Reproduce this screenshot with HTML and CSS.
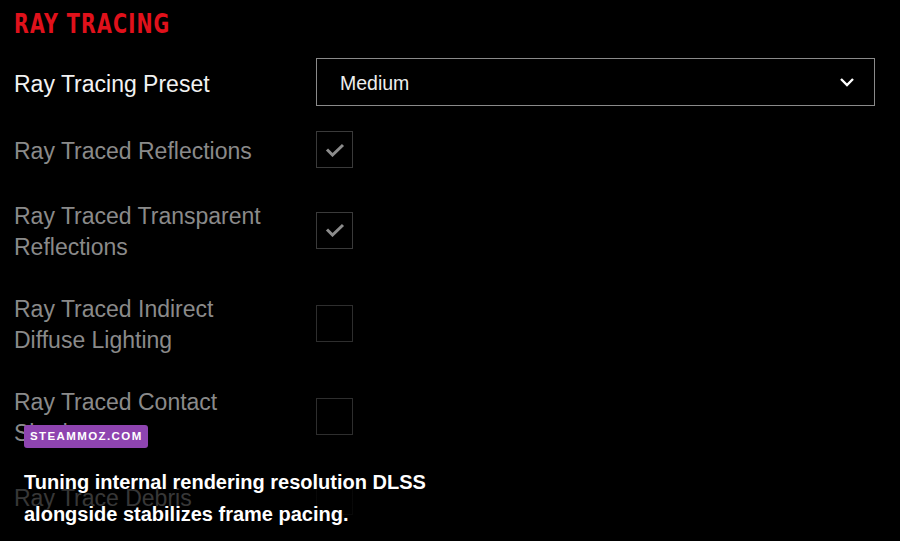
FILE: index.html
```html
<!DOCTYPE html>
<html>
<head>
<meta charset="utf-8">
<link rel="stylesheet" href="styles.css">
</head>
<body>
<div class="page">
  <h1 class="title"><span class="title-text">RAY TRACING</span></h1>
  <div class="row row-preset">
    <div class="label label-main">Ray Tracing Preset</div>
    <div class="select">
      <span class="select-value">Medium</span>
      <svg class="chevron" width="16" height="10" viewBox="0 0 16 10"><path d="M2 2 L8 8 L14 2" fill="none" stroke="#fff" stroke-width="2.4"/></svg>
    </div>
  </div>
  <div class="row">
    <div class="label">Ray Traced Reflections</div>
    <div class="check checked"><svg width="20" height="14" viewBox="0 0 20 14"><path d="M2 6.5 L7.5 12 L18 2" fill="none" stroke="#8c8c8c" stroke-width="3"/></svg></div>
  </div>
  <div class="row">
    <div class="label">Ray Traced Transparent<br>Reflections</div>
    <div class="check checked"><svg width="20" height="14" viewBox="0 0 20 14"><path d="M2 6.5 L7.5 12 L18 2" fill="none" stroke="#8c8c8c" stroke-width="3"/></svg></div>
  </div>
  <div class="row">
    <div class="label">Ray Traced Indirect<br>Diffuse Lighting</div>
    <div class="check"></div>
  </div>
  <div class="row">
    <div class="label">Ray Traced Contact<br>Shadows</div>
    <div class="check"></div>
  </div>
  <div class="row">
    <div class="label">Ray Trace Debris</div>
    <div class="check check-dim"></div>
  </div>
</div>
<div class="shade"></div>
<div class="overlay">
  <div class="badge">STEAMMOZ.COM</div>
  <p class="caption">Tuning internal rendering resolution DLSS<br>alongside stabilizes frame pacing.</p>
</div>
</body>
</html>
```
FILE: styles.css
```css
html, body {
  margin: 0;
  padding: 0;
  background: #000;
  width: 900px;
  height: 541px;
  overflow: hidden;
}
body {
  position: relative;
}
.page {
  padding: 8px 25px 0 14px;
  font-family: "Liberation Sans", Arial, sans-serif;
}
.title {
  margin: 0;
  font-family: "DejaVu Sans", sans-serif;
  font-weight: bold;
  font-size: 27px;
  letter-spacing: 1.6px;
  color: #e0111b;
  line-height: 32px;
}
.title-text {
  display: inline-block;
  transform: scaleX(0.71);
  transform-origin: left center;
}
.row {
  display: flex;
  align-items: center;
  margin-bottom: 31px;
}
.row-preset {
  margin-top: 18px;
  margin-bottom: 25px;
}
.label {
  width: 302px;
  padding-top: 2px;
  margin-bottom: -2px;
  font-size: 23px;
  line-height: 31px;
  color: #8a8a8a;
}
.label-main {
  color: #f2f2f2;
}
.select {
  flex: 1;
  height: 46px;
  border: 1px solid #8a8a8a;
  display: flex;
  align-items: center;
  justify-content: space-between;
  padding: 0 19px 0 23px;
}
.select-value {
  color: #eee;
  font-size: 19.5px;
  padding-top: 2px;
}
.check {
  width: 35px;
  height: 35px;
  border: 1px solid #2e2e2e;
  display: flex;
  align-items: center;
  justify-content: center;
}
.check.checked {
  border-color: #3a3a3a;
}
.check.check-dim {
  border-color: #151515;
}
.shade {
  position: absolute;
  left: 0;
  right: 0;
  top: 464px;
  bottom: 0;
  background: linear-gradient(to bottom, rgba(0,0,0,0.4), rgba(0,0,0,0.6) 30%);
}
.overlay {
  position: absolute;
  left: 24px;
  top: 425px;
  font-family: "Liberation Sans", Arial, sans-serif;
}
.badge {
  display: inline-block;
  background: #8e44b0;
  color: #fff;
  font-weight: bold;
  font-size: 11.5px;
  letter-spacing: 1.4px;
  line-height: 23px;
  padding: 0 5px 0 6px;
  border-radius: 3px;
}
.caption {
  margin: 18px 0 0 0;
  color: #fff;
  font-weight: bold;
  font-size: 20px;
  line-height: 32px;
  text-shadow: 0 0 3px rgba(0,0,0,0.8);
}
```
